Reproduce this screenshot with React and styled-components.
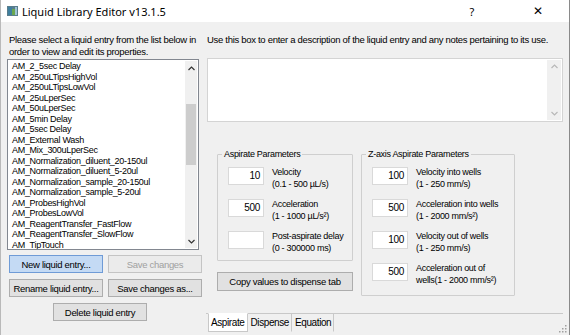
import * as React from 'react';
import styled, { createGlobalStyle } from 'styled-components';

const GlobalStyle = createGlobalStyle`
  html, body {
    margin: 0;
    padding: 0;
    background: #f0f0f0;
  }
  body {
    font-family: 'Liberation Sans', Arial, sans-serif;
    font-size: 9px;
    letter-spacing: -0.3px;
    color: #000;
  }
`;

const liquids = [
  'AM_2_5sec Delay',
  'AM_250uLTipsHighVol',
  'AM_250uLTipsLowVol',
  'AM_25uLperSec',
  'AM_50uLperSec',
  'AM_5min Delay',
  'AM_5sec Delay',
  'AM_External Wash',
  'AM_Mix_300uLperSec',
  'AM_Normalization_diluent_20-150ul',
  'AM_Normalization_diluent_5-20ul',
  'AM_Normalization_sample_20-150ul',
  'AM_Normalization_sample_5-20ul',
  'AM_ProbesHighVol',
  'AM_ProbesLowVol',
  'AM_ReagentTransfer_FastFlow',
  'AM_ReagentTransfer_SlowFlow',
  'AM_TipTouch',
  'AM_Wash_Default',
];

const aspirateFields = [
  { value: '10', label: 'Velocity', range: '(0.1 - 500 µL/s)' },
  { value: '500', label: 'Acceleration', range: '(1 - 1000 µL/s²)' },
  { value: '', label: 'Post-aspirate delay', range: '(0 - 300000 ms)' },
];

const zAxisFields = [
  { value: '100', label: 'Velocity into wells', range: '(1 - 250 mm/s)' },
  { value: '500', label: 'Acceleration into wells', range: '(1 - 2000 mm/s²)' },
  { value: '100', label: 'Velocity out of wells', range: '(1 - 250 mm/s)' },
  { value: '500', label: 'Acceleration out of', range: 'wells(1 - 2000 mm/s²)' },
];

function Chevron({ up, color }) {
  return (
    <svg width="7" height="5" viewBox="0 0 7 5">
      <path
        d={up ? 'M0.5 4 L3.5 1 L6.5 4' : 'M0.5 1 L3.5 4 L6.5 1'}
        fill="none"
        stroke={color}
        strokeWidth="1.2"
      />
    </svg>
  );
}

function AppIcon() {
  return (
    <svg width="11" height="10" viewBox="0 0 11 10">
      <rect x="0" y="0" width="11" height="10" fill="#5a7d8c" />
      <rect x="1" y="1" width="4" height="8" fill="#3f7f9f" />
      <rect x="5" y="3" width="3" height="6" fill="#6aa84f" />
      <rect x="8" y="1" width="2" height="8" fill="#9dc3d6" />
    </svg>
  );
}

function FieldRow({ value, label, range }) {
  return (
    <Row>
      <NumberBox>{value}</NumberBox>
      <RowLabel>
        {label}
        <br />
        {range}
      </RowLabel>
    </Row>
  );
}

export default function App() {
  return (
    <Window>
      <GlobalStyle />
      <TitleBar>
        <AppIcon />
        <Title>Liquid Library Editor v13.1.5</Title>
        <HelpGlyph>?</HelpGlyph>
        <CloseGlyph>✕</CloseGlyph>
      </TitleBar>

      <Body>
        <LeftPane>
          <Hint>
            Please select a liquid entry from the list below in
            <br />
            order to view and edit its properties.
          </Hint>
          <ListBox>
            <ListItems>
              {liquids.map((name) => (
                <ListItem key={name}>{name}</ListItem>
              ))}
            </ListItems>
            <ScrollBar>
              <ScrollArrow>
                <Chevron up color="#333" />
              </ScrollArrow>
              <ScrollTrack>
                <ScrollThumb />
              </ScrollTrack>
              <ScrollArrow>
                <Chevron color="#333" />
              </ScrollArrow>
            </ScrollBar>
          </ListBox>
          <ButtonGrid>
            <Button $default>New liquid entry...</Button>
            <Button disabled>Save changes</Button>
            <Button>Rename liquid entry...</Button>
            <Button>Save changes as...</Button>
            <DeleteButton>Delete liquid entry</DeleteButton>
          </ButtonGrid>
        </LeftPane>

        <RightPane>
          <Hint $indent>
            Use this box to enter a description of the liquid entry and any notes pertaining to its use.
          </Hint>
          <Description>
            <DescriptionText />
            <ThinScroll>
              <Chevron up color="#b8b8b8" />
              <Chevron color="#b8b8b8" />
            </ThinScroll>
          </Description>

          <TabControl>
            <TabPage>
              <Column $width={136}>
                <GroupBox $padBottom={7}>
                  <Legend>Aspirate Parameters</Legend>
                  <Rows>
                    {aspirateFields.map((f) => (
                      <FieldRow key={f.label} {...f} />
                    ))}
                  </Rows>
                </GroupBox>
                <CopyButton>Copy values to dispense tab</CopyButton>
              </Column>
              <Column $width={154}>
                <GroupBox $fill $padBottom={4}>
                  <Legend>Z-axis Aspirate Parameters</Legend>
                  <Rows>
                    {zAxisFields.map((f) => (
                      <FieldRow key={f.label} {...f} />
                    ))}
                  </Rows>
                </GroupBox>
              </Column>
            </TabPage>
            <TabStrip>
              <Tab $active>Aspirate</Tab>
              <Tab>Dispense</Tab>
              <Tab>Equation</Tab>
            </TabStrip>
          </TabControl>
        </RightPane>
      </Body>
      <Grip>
        <svg width="8" height="8" viewBox="0 0 8 8">
          {[[6, 0], [6, 3], [3, 3], [6, 6], [3, 6], [0, 6]].map(([x, y]) => (
            <rect key={`${x}-${y}`} x={x} y={y} width="1.5" height="1.5" fill="#a0a0a0" />
          ))}
        </svg>
      </Grip>
    </Window>
  );
}

const Window = styled.div`
  position: relative;
  width: 570px;
  height: 335px;
  box-sizing: border-box;
  border-left: 1px solid #b9b9b9;
  border-right: 1px solid #8a8a8a;
  background: #f0f0f0;
  display: flex;
  flex-direction: column;
  overflow: hidden;
`;

const TitleBar = styled.div`
  height: 22px;
  background: #fff;
  display: flex;
  align-items: center;
  padding-left: 6px;
  flex-shrink: 0;
  letter-spacing: 0;
`;

const Title = styled.div`
  margin-left: 4px;
  font-family: 'Noto Sans', 'Liberation Sans', sans-serif;
  font-size: 11px;
  color: #000;
  flex: 1;
`;

const HelpGlyph = styled.div`
  width: 20px;
  font-family: 'Noto Sans', 'Liberation Sans', sans-serif;
  font-size: 11px;
  margin-right: 46px;
  text-align: center;
`;

const CloseGlyph = styled.div`
  width: 20px;
  font-family: 'DejaVu Sans', sans-serif;
  font-size: 12px;
  margin-right: 21px;
  text-align: center;
`;

const Body = styled.div`
  flex: 1;
  display: flex;
  padding: 12px 6px 0 6px;
  gap: 4px;
`;

const LeftPane = styled.div`
  width: 195px;
  display: flex;
  flex-direction: column;
`;

const Hint = styled.div`
  font-size: 9.5px;
  line-height: 12px;
  padding-left: ${(p) => (p.$indent ? '1px' : '2px')};
  height: 24px;
  white-space: nowrap;
`;

const ListBox = styled.div`
  margin-top: 1px;
  width: 192px;
  height: 191px;
  box-sizing: border-box;
  border: 1px solid #828790;
  background: #fff;
  display: flex;
  overflow: hidden;
`;

const ListItems = styled.div`
  flex: 1;
  padding: 1px 0 0 4px;
  overflow: hidden;
`;

const ListItem = styled.div`
  height: 10.5px;
  line-height: 10.5px;
  white-space: nowrap;
`;

const ScrollBar = styled.div`
  width: 12px;
  margin: 1px 1px 1px 0;
  display: flex;
  flex-direction: column;
  background: #f0f0f0;
`;

const ScrollArrow = styled.div`
  height: 14px;
  display: flex;
  align-items: center;
  justify-content: center;
`;

const ScrollTrack = styled.div`
  flex: 1;
  padding: 29px 1px 0 1px;
`;

const ScrollThumb = styled.div`
  height: 61px;
  background: #cdcdcd;
`;

const ButtonGrid = styled.div`
  margin-top: 5px;
  padding-left: 2px;
  display: grid;
  grid-template-columns: 94px 94px;
  column-gap: 5px;
  row-gap: 6px;
`;

const Button = styled.button`
  height: 18px;
  padding: 0;
  box-sizing: border-box;
  font-family: inherit;
  font-size: 9.5px;
  letter-spacing: -0.3px;
  white-space: nowrap;
  color: #000;
  background: ${(p) => (p.$default ? '#c4daf4' : '#e1e1e1')};
  border: 1px solid ${(p) => (p.$default ? '#6f9bd6' : '#adadad')};
  &:disabled {
    color: #a0a0a0;
    background: #ebebeb;
    border-color: #c4c4c4;
  }
`;

const DeleteButton = styled(Button)`
  grid-column: 1 / span 2;
  width: 94px;
  margin-left: 44px;
`;

const RightPane = styled.div`
  flex: 1;
  display: flex;
  flex-direction: column;
`;

const Description = styled.div`
  margin-left: 1px;
  height: 64px;
  box-sizing: border-box;
  border: 1px solid #d4d4d4;
  background: #fff;
  display: flex;
`;

const DescriptionText = styled.div`
  flex: 1;
`;

const ThinScroll = styled.div`
  width: 14px;
  margin: 1px;
  background: #f0f0f0;
  display: flex;
  flex-direction: column;
  justify-content: space-between;
  align-items: center;
  padding: 4px 0;
  box-sizing: border-box;
`;

const TabControl = styled.div`
  flex: 1;
  display: flex;
  flex-direction: column;
`;

const TabPage = styled.div`
  height: 192px;
  box-sizing: border-box;
  padding: 26px 0 17px 11px;
  display: flex;
  gap: 8px;
  border-bottom: 1px solid #c8c8c8;
`;

const Column = styled.div`
  width: ${(p) => p.$width}px;
  display: flex;
  flex-direction: column;
`;

const GroupBox = styled.fieldset`
  margin: 0;
  padding: 7px 0 ${(p) => p.$padBottom}px 10px;
  min-inline-size: 0;
  border: 1px solid #cfcfcf;
  border-radius: 1px;
  flex: ${(p) => (p.$fill ? 1 : 'none')};
`;

const Legend = styled.legend`
  padding: 0 2px;
  margin-left: -6px;
  line-height: 12px;
`;

const Rows = styled.div`
  display: flex;
  flex-direction: column;
  gap: 10px;
`;

const Row = styled.div`
  display: flex;
  align-items: flex-start;
  gap: 8px;
`;

const NumberBox = styled.div`
  width: 36px;
  height: 18px;
  flex-shrink: 0;
  box-sizing: border-box;
  border: 1px solid #d9d9d9;
  background: #fff;
  text-align: right;
  padding-right: 3px;
  line-height: 16px;
  font-size: 10px;
`;

const RowLabel = styled.div`
  line-height: 12px;
  margin-top: -1px;
  margin-bottom: -1px;
  white-space: nowrap;
`;

const CopyButton = styled(Button)`
  margin-top: 11px;
  height: 19px;
  width: 136px;
`;

const TabStrip = styled.div`
  display: flex;
  padding-left: 2px;
`;

const Tab = styled.div`
  height: 19px;
  line-height: 18px;
  padding: 0 2px;
  font-size: 10px;
  letter-spacing: -0.4px;
  margin-top: -1px;
  box-sizing: border-box;
  background: ${(p) => (p.$active ? '#fff' : 'transparent')};
  border: 1px solid ${(p) => (p.$active ? '#c8c8c8' : 'transparent')};
  border-top: ${(p) => (p.$active ? '1px solid #fff' : '1px solid transparent')};
  border-right-color: #c8c8c8;
`;

const Grip = styled.div`
  position: absolute;
  right: 2px;
  bottom: 2px;
  line-height: 0;
`;
